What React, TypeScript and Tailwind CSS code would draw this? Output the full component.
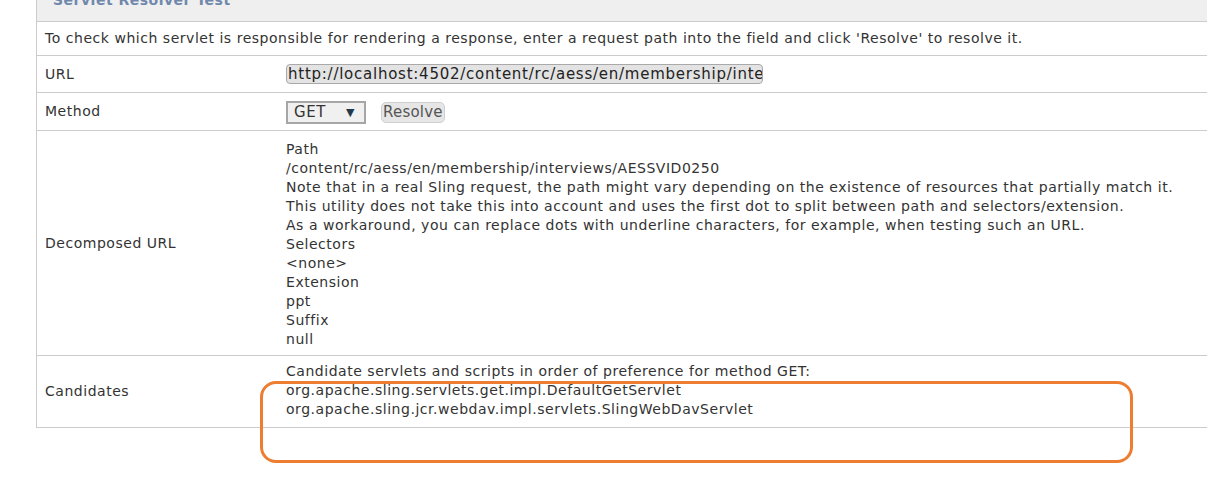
import React from 'react';

const font = { fontFamily: '"DejaVu Sans", Verdana, sans-serif' };

const decomposed = [
  'Path',
  '/content/rc/aess/en/membership/interviews/AESSVID0250',
  'Note that in a real Sling request, the path might vary depending on the existence of resources that partially match it.',
  'This utility does not take this into account and uses the first dot to split between path and selectors/extension.',
  'As a workaround, you can replace dots with underline characters, for example, when testing such an URL.',
  'Selectors',
  '<none>',
  'Extension',
  'ppt',
  'Suffix',
  'null',
];

const candidates = [
  'Candidate servlets and scripts in order of preference for method GET:',
  'org.apache.sling.servlets.get.impl.DefaultGetServlet',
  'org.apache.sling.jcr.webdav.impl.servlets.SlingWebDavServlet',
];

function Row({ label, children, className = '' }: { label: string; children: React.ReactNode; className?: string }) {
  return (
    <div className={`grid grid-cols-[241px_1fr] border-b border-[#cccccc] ${className}`}>
      <div className="flex items-center pl-[8px]">{label}</div>
      <div className="pl-[8px]">{children}</div>
    </div>
  );
}

export default function App() {
  return (
    <div className="relative w-[1207px] h-[481px] overflow-hidden bg-white text-[14px] tracking-[0.53px] leading-[19px] text-[#333333]" style={font}>
      <div className="ml-[36px] border-l border-[#cccccc]">
        <div className="h-[22px] overflow-hidden bg-[#efefef] border-b border-[#cccccc] pl-[16px]">
          <div className="-mt-[9px] text-[14px] tracking-[0.5px] font-bold text-[#7088ab]">Servlet Resolver Test</div>
        </div>
        <div className="h-[34px] flex items-center pl-[8px] border-b border-[#cccccc] whitespace-nowrap">
          To check which servlet is responsible for rendering a response, enter a request path into the field and click 'Resolve' to resolve it.
        </div>
        <Row label="URL" className="h-[37px]">
          <div className="h-full flex items-center">
            <div className="w-[477px] h-[20px] rounded-[4px] border border-[#a9a9a9] bg-[#e3e3e3] overflow-hidden whitespace-nowrap pl-[1px] text-[15px] tracking-[0.75px] leading-[18px] text-[#222222]">
              http://localhost:4502/content/rc/aess/en/membership/interviews/AESSVID0250.ppt
            </div>
          </div>
        </Row>
        <Row label="Method" className="h-[38px]">
          <div className="h-full flex items-center gap-[15px] pt-[1px]">
            <div className="w-[80px] h-[23px] border-2 border-[#a6a6a6] bg-[#f0f0f0] flex items-center justify-between pl-[6px] pr-[9px] text-[15px] text-[#333333]">
              <span>GET</span>
              <span className="text-[11px] text-[#1f3a4d]">▼</span>
            </div>
            <div className="h-[21px] px-[1px] rounded-[5px] border border-[#cfcfcf] bg-[#e6e6e6] flex items-center text-[15px] tracking-[0.2px] text-[#555555]">
              Resolve
            </div>
          </div>
        </Row>
        <Row label="Decomposed URL" className="h-[225px]">
          <div className="pt-[9px]">
            {decomposed.map((l, i) => (
              <div key={i} className="whitespace-nowrap">{l}</div>
            ))}
          </div>
        </Row>
        <Row label="Candidates" className="h-[72px]">
          <div className="pt-[6px]">
            {candidates.map((l, i) => (
              <div key={i} className="whitespace-nowrap">{l}</div>
            ))}
          </div>
        </Row>
      </div>
      <div className="absolute left-[260px] top-[381px] w-[873px] h-[82px] rounded-[16px] border-[3px] border-[#ed7d31]" />
    </div>
  );
}
